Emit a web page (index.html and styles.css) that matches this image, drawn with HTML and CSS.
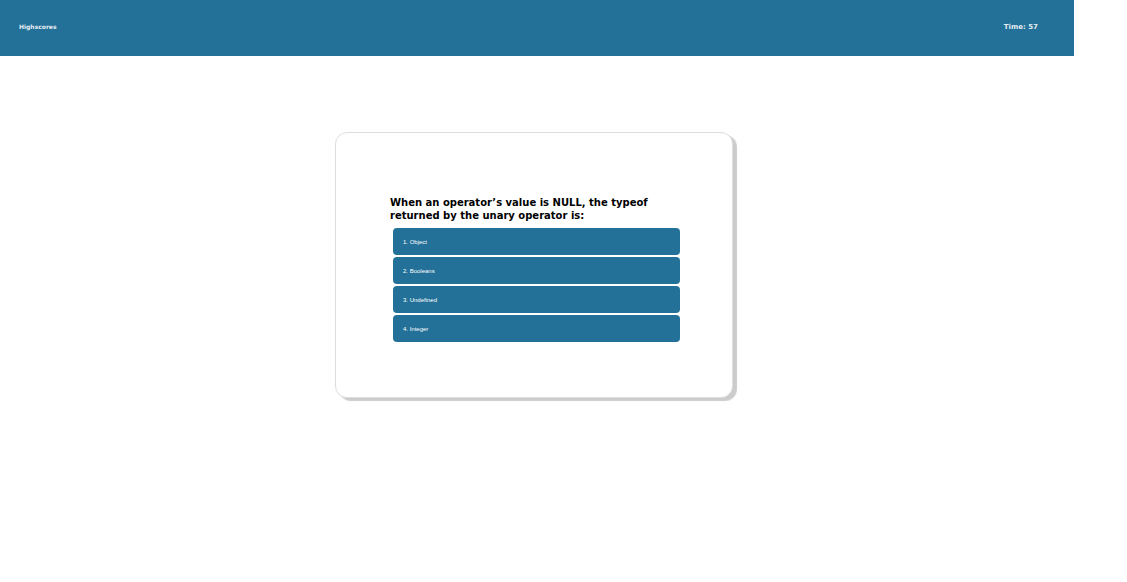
FILE: index.html
```html
<!DOCTYPE html>
<html lang="en">
<head>
<meta charset="utf-8">
<meta name="viewport" content="width=device-width, initial-scale=1">
<title>Code Quiz</title>
<link rel="stylesheet" href="styles.css">
</head>
<body>
<div class="page">
  <header class="topbar">
    <a class="topbar-link" href="#highscores">Highscores</a>
    <p class="timer">Time: 57</p>
  </header>
  <main class="quiz">
    <section class="card">
      <h1 class="question">When an operator’s value is NULL, the typeof returned by the unary operator is:</h1>
      <div class="answers">
        <button class="answer" type="button">1. Object</button>
        <button class="answer" type="button">2. Booleans</button>
        <button class="answer" type="button">3. Undefined</button>
        <button class="answer" type="button">4. Integer</button>
      </div>
    </section>
  </main>
</div>
</body>
</html>
```

FILE: styles.css
```css
* {
  box-sizing: border-box;
}

body {
  margin: 0;
  background: #fff;
  font-family: Verdana, "DejaVu Sans", sans-serif;
}

.page {
  margin-right: 53px;
}

.topbar {
  display: flex;
  justify-content: space-between;
  padding: 22px 36px 24px 19px;
  background: #237099;
  color: #e4edf2;
  font-size: 7px;
  line-height: 10px;
}

.topbar-link {
  color: inherit;
  font-size: 6px;
  font-weight: bold;
  text-decoration: none;
}

.timer {
  margin: 0;
  font-weight: bold;
}

.quiz {
  display: flex;
  justify-content: center;
  padding: 76px 6px 24px 0;
}

.card {
  width: 398px;
  max-width: 100%;
  padding: 63px 52px 55px 54px;
  border: 1px solid #ddd;
  border-radius: 12px;
  background: #fff;
  box-shadow: 4px 3px 1px #ccc;
}

.question {
  margin: 0 0 6px;
  color: #000;
  font-size: 10px;
  line-height: 13px;
}

.answers {
  display: flex;
  flex-direction: column;
  gap: 2px;
  padding: 0 0 0 3px;
}

.answer {
  min-height: 27px;
  padding: 0 10px;
  border: 0;
  border-radius: 4px;
  background: #237099;
  color: #fff;
  font-family: "Liberation Sans", Arial, sans-serif;
  font-size: 6px;
  text-align: left;
}
```
